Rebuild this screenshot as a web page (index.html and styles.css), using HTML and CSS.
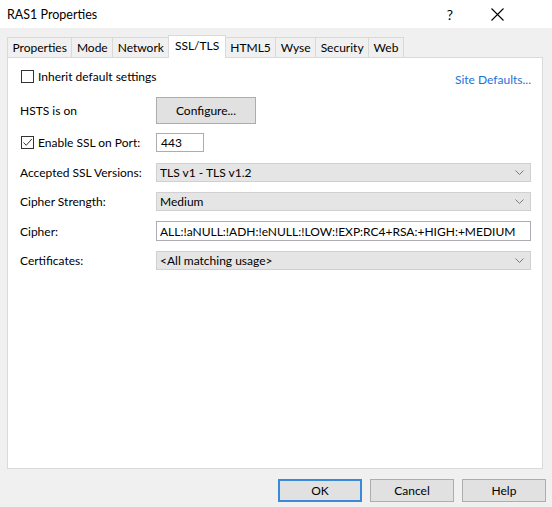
FILE: index.html
```html
<!DOCTYPE html>
<html>
<head>
<meta charset="utf-8">
<title>RAS1 Properties</title>
<link rel="stylesheet" href="styles.css">
</head>
<body>
<div class="titlebar">
  <span class="title">RAS1 Properties</span>
  <span class="help">?</span>
  <svg class="close" width="13" height="13" viewBox="0 0 13 13"><path d="M0.5 0.5 L12.5 12.5 M12.5 0.5 L0.5 12.5" stroke="#000" stroke-width="1.1" fill="none"/></svg>
</div>
<div class="dialog">
  <div class="tabs">
    <div class="tab">Properties</div>
    <div class="tab">Mode</div>
    <div class="tab">Network</div>
    <div class="tab active">SSL/TLS</div>
    <div class="tab">HTML5</div>
    <div class="tab">Wyse</div>
    <div class="tab">Security</div>
    <div class="tab">Web</div>
  </div>
  <div class="panel">
    <div class="row row-inherit">
      <label class="check"><span class="box"></span>Inherit default settings</label>
      <span class="link">Site Defaults...</span>
    </div>
    <div class="row row-hsts">
      <span class="label">HSTS is on</span>
      <span class="btn btn-configure">Configure...</span>
    </div>
    <div class="row row-port">
      <label class="check label"><span class="box checked"><svg width="11" height="11" viewBox="0 0 11 11"><path d="M1.5 5.5 L4.2 8.3 L9.8 2" stroke="#333" stroke-width="1" fill="none"/></svg></span>Enable SSL on Port:</label>
      <span class="input input-port">443</span>
    </div>
    <div class="row row-select first">
      <span class="label">Accepted SSL Versions:</span>
      <span class="select">TLS v1 - TLS v1.2<svg class="chev" width="9" height="5" viewBox="0 0 9 5"><path d="M0.5 0.5 L4.5 4.5 L8.5 0.5" stroke="#7a7a7a" stroke-width="1" fill="none"/></svg></span>
    </div>
    <div class="row row-select">
      <span class="label">Cipher Strength:</span>
      <span class="select">Medium<svg class="chev" width="9" height="5" viewBox="0 0 9 5"><path d="M0.5 0.5 L4.5 4.5 L8.5 0.5" stroke="#7a7a7a" stroke-width="1" fill="none"/></svg></span>
    </div>
    <div class="row row-cipher">
      <span class="label">Cipher:</span>
      <span class="input input-cipher">ALL:!aNULL:!ADH:!eNULL:!LOW:!EXP:RC4+RSA:+HIGH:+MEDIUM</span>
    </div>
    <div class="row row-select">
      <span class="label">Certificates:</span>
      <span class="select">&lt;All matching usage&gt;<svg class="chev" width="9" height="5" viewBox="0 0 9 5"><path d="M0.5 0.5 L4.5 4.5 L8.5 0.5" stroke="#7a7a7a" stroke-width="1" fill="none"/></svg></span>
    </div>
  </div>
  <div class="buttons">
    <span class="btn btn-ok">OK</span>
    <span class="btn btn-cancel">Cancel</span>
    <span class="btn btn-help">Help</span>
  </div>
</div>
</body>
</html>
```

FILE: styles.css
```css
* { box-sizing: border-box; }
html, body { margin: 0; padding: 0; }
body {
  width: 552px;
  height: 507px;
  background: #f0f0f0;
  font-family: "Lato", "Liberation Sans", sans-serif;
  font-size: 12px;
  color: #000;
  overflow: hidden;
}
.titlebar {
  height: 28px;
  background: #fff;
  display: flex;
  align-items: center;
  padding-left: 7px;
}
.title { font-size: 12.5px; flex: 1; }
.help { font-size: 14px; margin-right: 38px; }
.close { margin-right: 48px; }

.dialog { padding-top: 7px; }
.tabs {
  display: flex;
  align-items: flex-end;
  height: 22px;
  margin-left: 7px;
  position: relative;
  z-index: 1;
}
.tab {
  height: 20px;
  line-height: 19px;
  padding: 0 4.5px;
  border: 1px solid #d9d9d9;
  border-bottom: none;
  background: #f0f0f0;
  margin-right: -1px;
}
.tab.active {
  height: 23px;
  line-height: 20px;
  background: #fff;
  margin-bottom: -1px;
  padding: 0 5.5px;
  position: relative;
  z-index: 2;
}
.panel {
  margin: 0 9px 0 7px;
  height: 412px;
  background: #fff;
  border: 1px solid #d9d9d9;
  padding: 0 11px 0 12px;
}
.row { display: flex; align-items: center; }
.label { width: 136px; flex: none; }
.check { display: flex; align-items: center; }
.box {
  width: 13px;
  height: 13px;
  border: 1px solid #333;
  margin: 0 4px 0 1px;
  display: flex;
  align-items: center;
  justify-content: center;
  background: #fff;
}
.row-inherit { margin-top: 8px; height: 20px; align-items: flex-start; padding-top: 3px; }
.row-inherit .check { flex: 1; }
.link { color: #1a73d9; margin-top: 3px; margin-right: 0; }
.row-hsts { margin-top: 11px; height: 27px; }
.row-port { margin-top: 9px; height: 18px; }
.btn {
  display: flex;
  align-items: center;
  justify-content: center;
  background: #e1e1e1;
  border: 1px solid #adadad;
}
.btn-configure { width: 100px; height: 27px; }
.input {
  display: flex;
  align-items: center;
  background: #fff;
  border: 1px solid #abadb3;
  padding-left: 4px;
}
.input-port { width: 48px; height: 19px; }
.row-select { margin-top: 10px; height: 19px; }
.row-select.first { margin-top: 12px; }
.select {
  flex: 1;
  height: 19px;
  display: flex;
  align-items: center;
  background: #e5e5e5;
  border: 1px solid #d0d0d0;
  padding-left: 3px;
  padding-right: 6px;
}
.chev { margin-left: auto; }
.row-cipher { margin-top: 10px; height: 20px; }
.input-cipher { flex: 1; height: 20px; padding-left: 3px; }

.buttons {
  display: flex;
  justify-content: flex-end;
  gap: 8px;
  margin-top: 10px;
  margin-right: 6px;
}
.buttons .btn { width: 84px; height: 23px; }
.btn-ok { border: 2px solid #3b8ad9; }
```
